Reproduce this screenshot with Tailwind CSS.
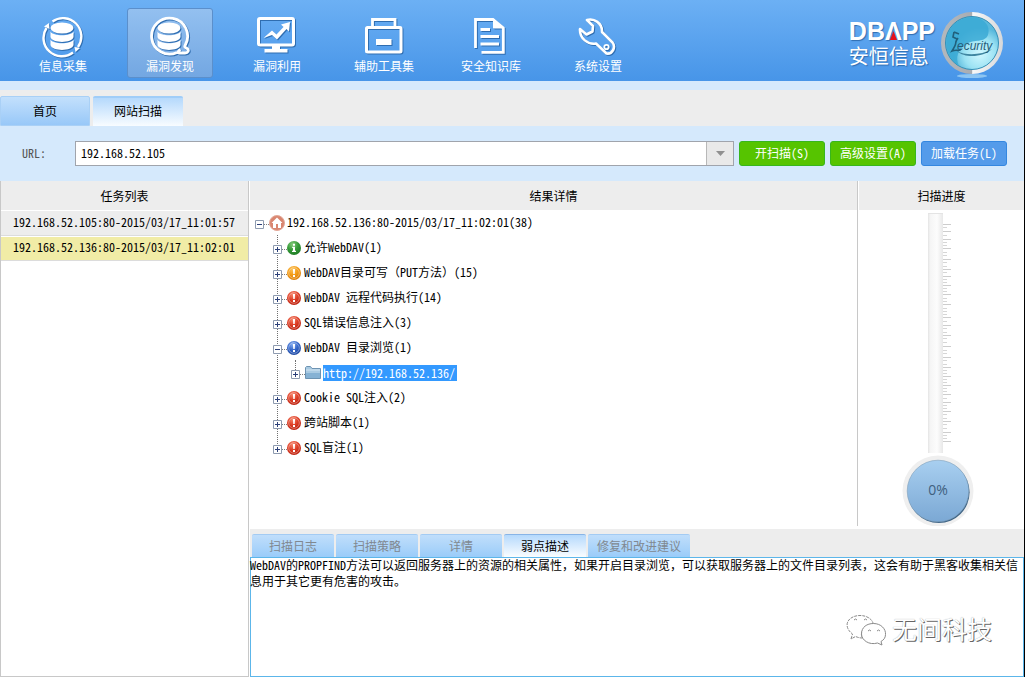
<!DOCTYPE html>
<html lang="zh-CN">
<head>
<meta charset="utf-8">
<title>网站扫描</title>
<script src="https://cdn.jsdelivr.net/npm/@tailwindcss/browser@4"></script>
</head>
<body class="flex min-h-screen flex-col border-r border-black bg-white font-['Noto_Sans_Mono_CJK_SC','Noto_Sans_CJK_SC','Liberation_Mono',monospace] text-[12px] leading-4 text-black">

<svg class="absolute h-0 w-0" aria-hidden="true">
  <defs>
    <g id="database">
      <ellipse cx="20" cy="12" rx="11.5" ry="5.5"/>
      <path d="M8.500 15.500C11 20.500 29 20.500 31.500 15.500V21C30 27.500 10 27.500 8.500 21Z"/>
      <path d="M8.500 23.500C11 28.500 29 28.500 31.500 23.500V29C30 35.500 10 35.500 8.500 29Z"/>
    </g>
    <radialGradient id="red" cx=".4" cy=".25" r=".8"><stop offset="0" stop-color="#f7866c"/><stop offset=".5" stop-color="#dc3c24"/><stop offset="1" stop-color="#b8200f"/></radialGradient>
    <radialGradient id="orange" cx=".4" cy=".25" r=".8"><stop offset="0" stop-color="#fcc45c"/><stop offset=".5" stop-color="#f39a14"/><stop offset="1" stop-color="#d87c08"/></radialGradient>
    <radialGradient id="green" cx=".4" cy=".25" r=".8"><stop offset="0" stop-color="#86cc7c"/><stop offset=".5" stop-color="#359a38"/><stop offset="1" stop-color="#1d7a24"/></radialGradient>
    <radialGradient id="blue" cx=".4" cy=".25" r=".8"><stop offset="0" stop-color="#86aef0"/><stop offset=".5" stop-color="#3264c8"/><stop offset="1" stop-color="#1d469c"/></radialGradient>
    <g id="bang"><circle cx="7" cy="7" r="5.300" fill="none" stroke="#fff" stroke-opacity=".45" stroke-width=".8"/><path d="M5.900 3h2.200l-.4 5h-1.400zM6 9h2v1.900H6z" fill="#fff"/></g>
    <symbol id="alert-red" viewBox="0 0 14 14"><circle cx="7" cy="7" r="7" fill="url(#red)"/><use href="#bang"/></symbol>
    <symbol id="alert-orange" viewBox="0 0 14 14"><circle cx="7" cy="7" r="7" fill="url(#orange)"/><use href="#bang"/></symbol>
    <symbol id="alert-blue" viewBox="0 0 14 14"><circle cx="7" cy="7" r="7" fill="url(#blue)"/><use href="#bang"/></symbol>
    <symbol id="info-green" viewBox="0 0 14 14"><circle cx="7" cy="7" r="7" fill="url(#green)"/><path d="M6 2.800h2v1.900H6zM5.200 5.800H8v4h1v1.200H5V9.800h1V7h-.8z" fill="#fff"/></symbol>
    <symbol id="plus" viewBox="0 0 9 9"><path d="M.5.5h8v8h-8z" fill="#fff" stroke="#8e9bb0"/><path d="M2 4.500h5M4.500 2v5" stroke="#2b3f78"/></symbol>
    <symbol id="minus" viewBox="0 0 9 9"><path d="M.5.5h8v8h-8z" fill="#fff" stroke="#8e9bb0"/><path d="M2 4.500h5" stroke="#2b3f78"/></symbol>
  </defs>
</svg>

<header class="flex h-[81px] items-start justify-between bg-linear-to-b from-[#6cb0f4] to-[#4795e8] pr-5 pl-5">
  <nav class="flex gap-[21px] pt-2 text-white">
    <button class="flex h-[70px] w-[86px] flex-col items-center pt-2">
      <svg class="h-[42px] w-[42px] drop-shadow-[1px_1px_0_#2f6db0]" viewBox="0 0 42 42" fill="#fff"><use href="#database"/><path d="M10.500 5.500A18.300 18.300 0 0 1 36 31M31 36.500A18.300 18.300 0 0 1 4.500 12" fill="none" stroke="#fff" stroke-width="2.400"/><path d="M2 10.500l5-3.500.5 6zM32.500 31l5.500 1-4.500 4z"/></svg>
      <span class="leading-4">信息采集</span>
    </button>
    <button class="flex h-[70px] w-[86px] flex-col items-center rounded-[3px] border border-[#5b8fcb] bg-linear-to-b from-[#93c0f0] to-[#73a7e2] pt-[7px]">
      <svg class="h-[42px] w-[42px] drop-shadow-[1px_1px_0_#2f6db0]" viewBox="0 0 42 42" fill="#fff"><use href="#database"/><path d="M28 36.500A18 18 0 1 1 36.500 28.500C35.500 30.500 35 31 38 32.500C40.500 34 39 37 36 37H30.500C28 37 29.500 34.500 31.500 33.500" fill="none" stroke="#fff" stroke-width="2.800"/></svg>
      <span class="leading-4">漏洞发现</span>
    </button>
    <button class="flex h-[70px] w-[86px] flex-col items-center pt-2">
      <svg class="h-[42px] w-[42px] drop-shadow-[1px_1px_0_#2f6db0]" viewBox="0 0 42 42" fill="#fff"><rect x="2.500" y="2.500" width="35" height="26.500" rx="1.500" fill="none" stroke="#fff" stroke-width="3"/><path d="M16 30h8v3h7.500v3.500H8.500V33H16zM7.500 22L16 14.500l4.500 4 7-7.500-2.500-2.500L34 6l-1 9.500-2.500-2.500L21 23.500l-5-4.500z"/></svg>
      <span class="leading-4">漏洞利用</span>
    </button>
    <button class="flex h-[70px] w-[86px] flex-col items-center pt-2">
      <svg class="h-[42px] w-[42px] drop-shadow-[1px_1px_0_#2f6db0]" viewBox="0 0 42 42" fill="none" stroke="#fff" stroke-width="3"><rect x="3.500" y="11.500" width="34.500" height="24.500" rx="1"/><path d="M9.500 11V3.500H32V11" stroke-width="2.800"/><path d="M13 26h15.500" stroke-width="6"/></svg>
      <span class="leading-4">辅助工具集</span>
    </button>
    <button class="flex h-[70px] w-[86px] flex-col items-center pt-2">
      <svg class="h-[42px] w-[42px] drop-shadow-[1px_1px_0_#2f6db0]" viewBox="-2 0 42 42" fill="none" stroke="#fff" stroke-width="2.800"><path d="M3.500 32V3.500H21L31.300 12V36.300H9.500"/><path d="M21.500 3.500V12H31z" fill="#fff" stroke-width="1"/><path d="M8.500 13.500H18M8.500 20.500H27M8.500 28H27"/></svg>
      <span class="leading-4">安全知识库</span>
    </button>
    <button class="flex h-[70px] w-[86px] flex-col items-center pt-2">
      <svg class="h-[42px] w-[42px] drop-shadow-[1px_1px_0_#2f6db0]" viewBox="1 0 42 42" fill="none" stroke="#fff" stroke-width="2.600" stroke-linejoin="round"><path d="M11 4C18 2 26.500 7 26 16L36.500 26.500C40 31 36.500 38.500 30.500 37.500L20 27.500C12 29 3.500 22.500 4 13L10.500 18.500L16.500 15.500L17 10Z"/><circle cx="30.500" cy="31" r="2.200" stroke-width="1.800"/></svg>
      <span class="leading-4">系统设置</span>
    </button>
  </nav>
  <div class="flex gap-[5px] pt-3">
    <div class="pt-[5px] text-white [text-shadow:1px_1px_1px_#2f6db0]">
      <div class="flex font-['Liberation_Sans',sans-serif] text-[25px] leading-7 font-bold"><span>DB</span><span class="relative">Λ<svg class="absolute bottom-[5px] left-[5px] h-[9px] w-[7px]" viewBox="0 0 7 9"><path d="M3.500 0L7 9H0z" fill="#e5121b"/></svg></span><span>PP</span></div>
      <div class="text-[20px] leading-[22px]">安恒信息</div>
    </div>
    <svg class="h-[66px] w-[64px]" viewBox="0 0 64 66" role="img" aria-label="Security">
      <defs>
        <linearGradient id="rim"><stop offset="0" stop-color="#b4b8bc"/><stop offset=".5" stop-color="#a9adb3"/><stop offset=".51" stop-color="#f8f8f8"/><stop offset="1" stop-color="#d6d8da"/></linearGradient>
        <radialGradient id="orb" cx=".65" cy=".7"><stop offset="0" stop-color="#d2f8ff"/><stop offset=".6" stop-color="#9be2f3"/><stop offset="1" stop-color="#58b8dc"/></radialGradient>
      </defs>
      <ellipse cx="32" cy="64" rx="15" ry="2" fill="#8dc5f2"/>
      <circle cx="32" cy="31" r="31" fill="url(#rim)"/>
      <circle cx="32" cy="31" r="26.500" fill="url(#orb)" stroke="#348fb6"/>
      <path d="M19 54C2 43 2 17 20 8C38 0 52 11 48 23C45 31 34 27 26 32C18 38 15 45 19 54Z" fill="#3aa9d5" opacity=".85"/>
      <path d="M14 20l5 2M14 20l-1 5 4 2M18 26c-5 7 1 2-6 13 5-2 8 1 9-2" fill="none" stroke="#21607c" stroke-width="1.600"/>
      <path d="M17 39C26 44 42 43 52 37C44 45 25 47 17 39Z" fill="#3f86a1"/>
      <text x="17" y="38" fill="#265d78" font-family="Liberation Sans, sans-serif" font-size="12" font-style="italic">ecurity</text>
    </svg>
  </div>
</header>

<div class="h-[9px] bg-[#d5e9fc]"></div>

<nav class="flex h-9 items-end gap-[3px] bg-[#ededed]">
  <button class="h-[30px] w-[90px] rounded-t-[2px] border border-[#a9d0f6] bg-linear-to-b from-[#c3e0fc] to-[#98c8f8]">首页</button>
  <button class="h-[30px] w-[90px] rounded-t-[2px] border-t-2 border-[#a0cdf8] bg-linear-to-b from-[#b5d9fc] to-[#f8fcff] pb-[2px]">网站扫描</button>
</nav>

<form class="flex h-[55px] items-center bg-[#d5e9fc] pr-[17px] pl-[22px]" onsubmit="return false">
  <label for="url" class="w-[53px] pb-[2px] text-[#555]">URL:</label>
  <div class="flex h-[25px] min-w-0 flex-1 border border-[#a0a4ac] bg-white">
    <input id="url" type="text" value="192.168.52.105" class="min-w-0 flex-1 px-[5px] pb-[2px] outline-none">
    <button type="button" aria-label="历史地址" class="flex w-[27px] items-center justify-center border-l border-[#b8b8b8] bg-[#e9e9e9]"><svg class="h-[5px] w-[9px]" viewBox="0 0 9 5"><path d="M0 0h9L4.500 5z" fill="#909090"/></svg></button>
  </div>
  <div class="ml-[5px] flex gap-[5px] text-white">
    <button class="h-[25px] w-[86px] rounded-[3px] border border-[#38b61c] bg-[#56c400] pb-[2px]">开扫描(S)</button>
    <button class="h-[25px] w-[86px] rounded-[3px] border border-[#38b61c] bg-[#56c400] pb-[2px]">高级设置(A)</button>
    <button class="h-[25px] w-[86px] rounded-[3px] border border-[#3487e0] bg-[#549bea] pb-[2px]">加载任务(L)</button>
  </div>
</form>

<main class="flex flex-1">
  <aside class="w-[249px] border-r border-b border-l border-[#c8c8c8]">
    <h2 class="flex h-[30px] items-center justify-center border-b border-white bg-[#ededed]">任务列表</h2>
    <ul>
      <li class="h-[25px] border-b border-[#dcdcdc] bg-[#ededed] pt-[3px] pl-3">192.168.52.105:80-2015/03/17_11:01:57</li>
      <li class="h-[25px] border-t border-b border-t-white border-b-[#dcdcdc] bg-[#f1eca6] pt-[2px] pl-3">192.168.52.136:80-2015/03/17_11:02:01</li>
    </ul>
  </aside>

  <div class="ml-px flex min-w-0 flex-1 flex-col">
    <div class="flex flex-1 pb-[3px]">
      <section class="min-w-0 flex-1 border-r border-[#c8c8c8]">
        <h2 class="flex h-[29px] items-center justify-center bg-[#ededed] pt-px">结果详情</h2>
        <div class="pl-[5px]">
          <div class="flex h-[25px] items-center">
            <button class="mt-1 h-[9px] w-[9px]" aria-label="收起"><svg class="h-[9px] w-[9px]"><use href="#minus"/></svg></button>
            <span class="mt-1 w-[5px] border-t border-dotted border-[#808080]"></span>
            <svg class="h-4 w-4" viewBox="0 0 16 16"><circle cx="8" cy="8" r="7.500" fill="#d98670" stroke="#e3a898"/><path d="M8 2.500L2.500 8H4v5h3V9h2v4h3V8h1.500z" fill="#fff"/></svg>
            <span class="pb-[2px] pl-[2px]">192.168.52.136:80-2015/03/17_11:02:01(38)</span>
          </div>
          <ul class="relative pl-[18px] before:absolute before:top-0 before:bottom-[12px] before:left-[22px] before:border-l before:border-dotted before:border-[#707070]">
            <li class="relative flex h-[25px] items-center">
              <button class="mt-1 h-[9px] w-[9px]" aria-label="展开"><svg class="h-[9px] w-[9px]"><use href="#plus"/></svg></button>
              <span class="mt-1 w-[5px] border-t border-dotted border-[#808080]"></span>
              <svg class="h-[14px] w-[14px]"><use href="#info-green"/></svg><span class="pb-[2px] pl-[3px]">允许WebDAV(1)</span>
            </li>
            <li class="relative flex h-[25px] items-center">
              <button class="mt-1 h-[9px] w-[9px]" aria-label="展开"><svg class="h-[9px] w-[9px]"><use href="#plus"/></svg></button>
              <span class="mt-1 w-[5px] border-t border-dotted border-[#808080]"></span>
              <svg class="h-[14px] w-[14px]"><use href="#alert-orange"/></svg><span class="pb-[2px] pl-[3px]">WebDAV目录可写（PUT方法）(15)</span>
            </li>
            <li class="relative flex h-[25px] items-center">
              <button class="mt-1 h-[9px] w-[9px]" aria-label="展开"><svg class="h-[9px] w-[9px]"><use href="#plus"/></svg></button>
              <span class="mt-1 w-[5px] border-t border-dotted border-[#808080]"></span>
              <svg class="h-[14px] w-[14px]"><use href="#alert-red"/></svg><span class="pb-[2px] pl-[3px]">WebDAV 远程代码执行(14)</span>
            </li>
            <li class="relative flex h-[25px] items-center">
              <button class="mt-1 h-[9px] w-[9px]" aria-label="展开"><svg class="h-[9px] w-[9px]"><use href="#plus"/></svg></button>
              <span class="mt-1 w-[5px] border-t border-dotted border-[#808080]"></span>
              <svg class="h-[14px] w-[14px]"><use href="#alert-red"/></svg><span class="pb-[2px] pl-[3px]">SQL错误信息注入(3)</span>
            </li>
            <li class="relative">
              <div class="flex h-[25px] items-center">
                <button class="mt-1 h-[9px] w-[9px]" aria-label="收起"><svg class="h-[9px] w-[9px]"><use href="#minus"/></svg></button>
                <span class="mt-1 w-[5px] border-t border-dotted border-[#808080]"></span>
                <svg class="h-[14px] w-[14px]"><use href="#alert-blue"/></svg><span class="pb-[2px] pl-[3px]">WebDAV 目录浏览(1)</span>
              </div>
              <div class="relative flex h-[25px] items-center pl-[18px] before:absolute before:top-0 before:left-[22px] before:h-[10px] before:border-l before:border-dotted before:border-[#707070]">
                <button class="mt-1 h-[9px] w-[9px]" aria-label="展开"><svg class="h-[9px] w-[9px]"><use href="#plus"/></svg></button>
                <span class="mt-1 w-[5px] border-t border-dotted border-[#808080]"></span>
                <svg class="h-[14px] w-4" viewBox="0 0 16 14"><path d="M.5 12.500V1.500L1.500.5H5.500L7 2.500H15.500V12.500z" fill="#a9cae2" stroke="#6d93b2"/><path d="M1 7h14v5H1z" fill="#86b2d4"/><path d="M1 4h14" stroke="#d3e6f3"/></svg>
                <a href="#" class="ml-[2px] bg-[#3399ff] pr-[2px] text-white">http://192.168.52.136/</a>
              </div>
            </li>
            <li class="relative flex h-[25px] items-center">
              <button class="mt-1 h-[9px] w-[9px]" aria-label="展开"><svg class="h-[9px] w-[9px]"><use href="#plus"/></svg></button>
              <span class="mt-1 w-[5px] border-t border-dotted border-[#808080]"></span>
              <svg class="h-[14px] w-[14px]"><use href="#alert-red"/></svg><span class="pb-[2px] pl-[3px]">Cookie SQL注入(2)</span>
            </li>
            <li class="relative flex h-[25px] items-center">
              <button class="mt-1 h-[9px] w-[9px]" aria-label="展开"><svg class="h-[9px] w-[9px]"><use href="#plus"/></svg></button>
              <span class="mt-1 w-[5px] border-t border-dotted border-[#808080]"></span>
              <svg class="h-[14px] w-[14px]"><use href="#alert-red"/></svg><span class="pb-[2px] pl-[3px]">跨站脚本(1)</span>
            </li>
            <li class="relative flex h-[25px] items-center">
              <button class="mt-1 h-[9px] w-[9px]" aria-label="展开"><svg class="h-[9px] w-[9px]"><use href="#plus"/></svg></button>
              <span class="mt-1 w-[5px] border-t border-dotted border-[#808080]"></span>
              <svg class="h-[14px] w-[14px]"><use href="#alert-red"/></svg><span class="pb-[2px] pl-[3px]">SQL盲注(1)</span>
            </li>
          </ul>
        </div>
      </section>

      <section class="ml-px w-[165px]">
        <h2 class="flex h-[29px] items-center justify-center bg-[#ededed] pt-px">扫描进度</h2>
        <svg class="mt-[3px] ml-[43px] h-[313px] w-[72px]" viewBox="0 0 72 313" role="img" aria-label="扫描进度 0%">
          <defs>
            <linearGradient id="tube"><stop offset="0" stop-color="#e4e4e4"/><stop offset=".15" stop-color="#f5f5f5"/><stop offset=".6" stop-color="#fcfcfc"/><stop offset="1" stop-color="#e8e8e8"/></linearGradient>
            <linearGradient id="bulb" x2="0" y2="1"><stop offset="0" stop-color="#a8cff0"/><stop offset="1" stop-color="#7ba8d4"/></linearGradient>
          </defs>
          <path d="M26 0h15v240H26z" fill="url(#tube)"/><path d="M26 .5h15" stroke="#e4e4e4"/>
          <path d="M41 11.500h8M41 18.500h8M41 26.500h8M41 35.500h8M41 46.500h8M41 56.500h8M41 63.500h8M41 72.500h8M41 81.500h8M41 91.500h8M41 104.500h8M41 112.500h8M41 122.500h8M41 133.500h8M41 144.500h8M41 154.500h8M41 163.500h8M41 172.500h8M41 181.500h8M41 189.500h8M41 198.500h8M41 208.500h8M41 219.500h8M41 228.500h8" stroke="#cdcdcd"/>
          <path d="M41 14.500h4M41 22.500h4M41 29.500h4M41 32.500h4M41 39.500h4M41 42.500h4M41 49.500h4M41 53.500h4M41 59.500h4M41 66.500h4M41 69.500h4M41 75.500h4M41 78.500h4M41 85.500h4M41 88.500h4M41 95.500h4M41 98.500h4M41 101.500h4M41 108.500h4M41 115.500h4M41 119.500h4M41 125.500h4M41 129.500h4M41 137.500h4M41 140.500h4M41 147.500h4M41 151.500h4M41 157.500h4M41 160.500h4M41 166.500h4M41 169.500h4M41 175.500h4M41 178.500h4M41 185.500h4M41 192.500h4M41 195.500h4M41 201.500h4M41 205.500h4M41 211.500h4M41 215.500h4M41 222.500h4M41 225.500h4" stroke="#d6d6d6"/>
          <circle cx="36" cy="278" r="35.500" fill="#efefef"/>
          <circle cx="36.800" cy="279.200" r="30.800" fill="#3e6384"/>
          <circle cx="36" cy="278" r="30.800" fill="url(#bulb)" stroke="#7f9fbb" stroke-width=".6"/>
          <text x="36" y="282" text-anchor="middle" fill="#40607e" font-family="Open Sans, sans-serif" font-size="14">0%</text>
        </svg>
      </section>
    </div>

    <section class="flex flex-col">
      <div class="flex h-7 items-end gap-[2px] bg-[#ededed] pl-[2px] text-[#808890]" role="tablist">
        <button role="tab" class="h-[23px] w-[82px] rounded-t-[2px] border-t border-[#a3cbf3] bg-linear-to-b from-[#c0defb] to-[#9accf9]">扫描日志</button>
        <button role="tab" class="h-[23px] w-[82px] rounded-t-[2px] border-t border-[#a3cbf3] bg-linear-to-b from-[#c0defb] to-[#9accf9]">扫描策略</button>
        <button role="tab" class="h-[23px] w-[82px] rounded-t-[2px] border-t border-[#a3cbf3] bg-linear-to-b from-[#c0defb] to-[#9accf9]">详情</button>
        <button role="tab" aria-selected="true" class="h-[23px] w-[82px] rounded-t-[2px] border-t border-[#88b4e6] bg-linear-to-b from-[#b5d9fc] to-[#fafdff] text-black">弱点描述</button>
        <button role="tab" class="h-[23px] w-[102px] rounded-t-[2px] border-t border-[#a3cbf3] bg-linear-to-b from-[#c0defb] to-[#9accf9]">修复和改进建议</button>
      </div>
      <div class="flex h-[120px] flex-col justify-between border border-[#5cb6ea]">
        <p class="-mt-px -ml-px">WebDAV的PROPFIND方法可以返回服务器上的资源的相关属性，如果开启目录浏览，可以获取服务器上的文件目录列表，这会有助于黑客收集相关信息用于其它更有危害的攻击。</p>
        <div class="mr-[31px] mb-[28px] flex items-center justify-end gap-[6px]">
          <svg class="h-8 w-10" viewBox="0 0 40 32" fill="#fff" stroke="#8a8a8a" stroke-width="1"><path d="M5 25l1.500-5C-4 12 2 1.500 14 1.500C22 1.500 27 6 27.500 11C18 12 13 18 16.500 24C13 24 11 23 9.500 22.500z" stroke-dasharray="3 1"/><path d="M36 31l-4.500-2C23 31.500 15.500 26 15.500 20C15.500 13 21 9.500 27.500 9.500C35 9.500 40 15 39.500 20.500C39.500 24 37.500 26 35 27.500z"/><path d="M8 6q1.500-2 3 0M18 6q1.500-2 3 0M22 17q1.500-2 3 0M31 17q1.500-2 3 0" fill="none"/></svg>
          <span class="pb-1 font-['Noto_Sans_CJK_SC',sans-serif] text-[25px] leading-8 text-white [text-shadow:1px_1px_0_#666,0_0_1px_#999]">无间科技</span>
        </div>
      </div>
    </section>
  </div>
</main>
</body>
</html>
